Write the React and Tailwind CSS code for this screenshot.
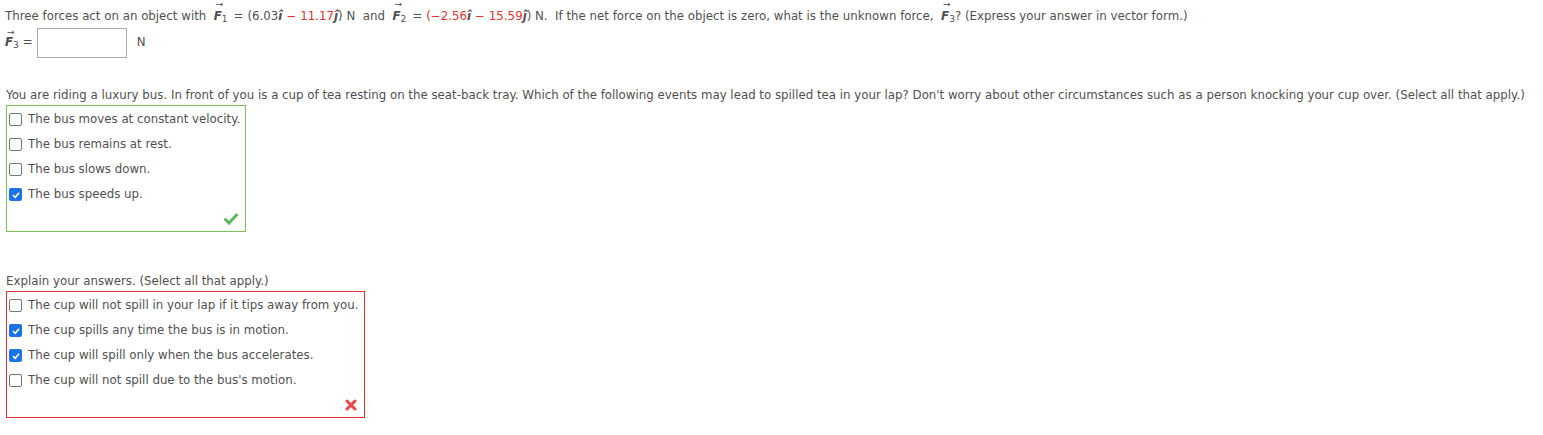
import React from "react";

const RED = "text-[#e8302f]";

function Vec({ n, tight }) {
  return (
    <span className={`relative inline-block font-bold italic ${tight ? "" : "mr-[2px]"}`}>
      <span className="absolute -top-[6px] left-[2px] text-[9px] not-italic font-normal leading-none">→</span>
      F<sub className="text-[9px] not-italic font-normal">{n}</sub>
    </span>
  );
}

const Hi = () => <span className="font-bold italic">ı̂</span>;
const Hj = () => <span className="font-bold italic">ȷ̂</span>;
const Op = ({ children, red }) => <span className={`mx-[4px] ${red ? RED : ""}`}>{children}</span>;

function Box({ checked }) {
  if (checked) {
    return (
      <span className="w-[13px] h-[13px] rounded-[2px] bg-[#1a73e8] flex items-center justify-center shrink-0">
        <svg width="10" height="10" viewBox="0 0 10 10">
          <path d="M2 5.2 L4.2 7.3 L8 2.8" stroke="white" strokeWidth="1.7" fill="none" />
        </svg>
      </span>
    );
  }
  return <span className="w-[13px] h-[13px] rounded-[2px] border border-[#767676] bg-white shrink-0" />;
}

function Choices({ items, border, mark }) {
  return (
    <div className={`border ${border} ml-[6px] pt-[1px] pl-[2px] pr-[5px] inline-flex flex-col`}>
      {items.map(([t, c], i) => (
        <div key={i} className="flex items-center gap-[6px] h-[25px]">
          <Box checked={c} />
          <span>{t}</span>
        </div>
      ))}
      <div className="flex justify-end h-[24px] items-center pr-[2px]">{mark}</div>
    </div>
  );
}

export default function App() {
  return (
    <div className="bg-white w-[1543px] h-[435px] text-[11.8px] text-[#505050] font-['DejaVu_Sans',sans-serif]">
      <div className="pl-[5px] pt-[6px] leading-[20px]">
        Three forces act on an object with &nbsp;<Vec n="1" /><Op>=</Op>(6.03<Hi /><Op red>−</Op><span className={RED}>11.17</span><Hj />) N &nbsp;and&nbsp;{" "}
        <Vec n="2" /><Op>=</Op><span className={RED}>(−2.56</span><Hi /><Op red>−</Op><span className={RED}>15.59</span><Hj />) N. &nbsp;If the net force on the
        object is zero, what is the unknown force, &nbsp;<Vec n="3" tight />? (Express your answer in vector form.)
      </div>
      <div className="flex items-center pl-[5px] mt-[2px] gap-[4px]">
        <Vec n="3" tight /> =
        <div className="w-[90px] h-[30px] border border-[#aaa]" />
        <span className="ml-[6px]">N</span>
      </div>

      <div className="pl-[6px] mt-[27px] leading-[20px] whitespace-nowrap">
        You are riding a luxury bus. In front of you is a cup of tea resting on the seat-back tray. Which of the following events may lead to spilled tea in your lap? Don't worry about other circumstances such as a person knocking your cup over. (Select all that apply.)
      </div>
      <Choices
        border="border-[#7cc05a]"
        items={[
          ["The bus moves at constant velocity.", false],
          ["The bus remains at rest.", false],
          ["The bus slows down.", false],
          ["The bus speeds up.", true],
        ]}
        mark={
          <svg width="14" height="12" viewBox="0 0 14 12">
            <path d="M1.5 6.5 L5 10 L12.5 2" stroke="#5cb85c" strokeWidth="3" fill="none" strokeLinecap="round" />
          </svg>
        }
      />

      <div className="pl-[6px] mt-[39px] leading-[20px]">Explain your answers. (Select all that apply.)</div>
      <Choices
        border="border-[#e8302f]"
        items={[
          ["The cup will not spill in your lap if it tips away from you.", false],
          ["The cup spills any time the bus is in motion.", true],
          ["The cup will spill only when the bus accelerates.", true],
          ["The cup will not spill due to the bus's motion.", false],
        ]}
        mark={
          <svg width="12" height="12" viewBox="0 0 12 12">
            <path d="M2 2 L10 10 M10 2 L2 10" stroke="#ee4444" strokeWidth="3" fill="none" strokeLinecap="round" />
          </svg>
        }
      />
    </div>
  );
}
